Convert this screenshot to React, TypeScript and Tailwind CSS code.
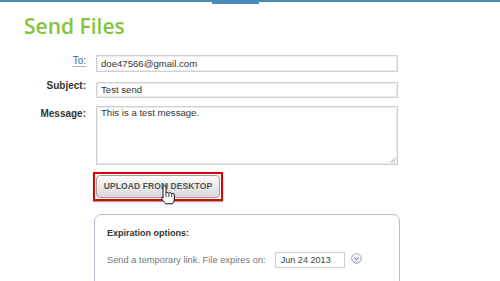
import React from "react";

function HandCursor() {
  return (
    <svg width="17" height="21" viewBox="0 0 17 21" className="absolute left-[160px] top-[185px]">
      <path
        d="M4.5 0.8c0.9 0 1.5 0.7 1.5 1.5V8c0.4-0.8 2.6-0.8 2.9 0.3c0.4-0.8 2.5-0.7 2.8 0.4c0.6-0.6 2.5-0.4 2.6 0.9V14c0 2.3-1.3 3.7-1.8 4.8H5.6c-0.6-1.1-2.4-2.8-3.5-4.4c-0.9-1.3-0.6-2.5 0.8-2.2L3 12.9V2.3C3 1.5 3.6 0.8 4.5 0.8Z"
        fill="#fff"
        stroke="#111"
        strokeWidth="1"
        strokeLinejoin="round"
      />
      <path d="M6 8v4M8.9 8.4v3.6M11.7 8.8v3.2" stroke="#111" strokeWidth="0.8" />
    </svg>
  );
}

export default function App() {
  return (
    <div className="w-[500px] h-[281px] overflow-hidden bg-white relative font-['Liberation_Sans',Arial,sans-serif] text-[#333]">
      <div className="flex items-start h-[4px]">
        <div className="w-[212px] h-[2px] bg-[#4a8cb8]" />
        <div className="w-[47px] h-[4px] bg-[#4a8cb8]" />
        <div className="flex-1 h-[2px] bg-[#4a8cb8]" />
      </div>

      <h1 className="ml-[24px] mt-[10px] text-[21px] leading-[24px] font-semibold text-[#86c440] font-['Open_Sans',sans-serif]">
        Send Files
      </h1>

      <div className="mt-[17px] flex flex-col">
        <div className="flex items-start">
          <div className="w-[86px] text-right text-[10px] leading-[12px] text-[#2d6b9c] underline decoration-[#8fb3d0] underline-offset-[2px]">
            To:
          </div>
          <div className="ml-[10px] w-[302px] h-[17px] border border-[#d0d0d0] shadow-[inset_0_0_0_1px_#ededed] pl-[4px] text-[9.6px] leading-[15px]">
            doe47566@gmail.com
          </div>
        </div>

        <div className="flex items-start mt-[10px]">
          <div className="w-[86px] text-right text-[10px] leading-[12px] font-bold -mt-[2px]">Subject:</div>
          <div className="ml-[10px] w-[302px] h-[16px] border border-[#d0d0d0] shadow-[inset_0_0_0_1px_#ededed] pl-[4px] text-[9.6px] leading-[14px]">
            Test send
          </div>
        </div>

        <div className="flex items-start mt-[8px]">
          <div className="w-[86px] text-right text-[10px] leading-[12px] font-bold pt-[2px]">Message:</div>
          <div className="relative ml-[10px] w-[302px] h-[59px] border border-[#d0d0d0] shadow-[inset_0_0_0_1px_#ededed] pl-[4px] text-[9.6px] leading-[11px]">
            This is a test message.
            <svg width="6" height="6" viewBox="0 0 6 6" className="absolute right-[1px] bottom-[1px]">
              <path d="M5.5 0.5L0.5 5.5M5.5 2.5L2.5 5.5M5.5 4.5L4.5 5.5" stroke="#999" strokeWidth="0.8" />
            </svg>
          </div>
        </div>
      </div>

      <div className="ml-[93px] mt-[7px] w-[130px] h-[29px] border-2 border-[#e00000] p-[1px] shadow-[0_1px_1px_rgba(0,0,0,0.35)]">
        <div className="h-full w-full rounded-[4px] border border-[#a0a0a0] bg-gradient-to-b from-[#fbfbfb] to-[#d9d9d9] flex items-center justify-center text-[8.5px] font-bold text-[#555] tracking-[0.1px]">
          UPLOAD FROM DESKTOP
        </div>
      </div>

      <div className="ml-[94px] mt-[13px] w-[306px] h-[80px] border border-[#b9bad3] rounded-[7px] pl-[12px] pt-[12px]">
        <div className="text-[9px] leading-[12px] font-bold">Expiration options:</div>
        <div className="mt-[13px] flex items-center h-[16px]">
          <span className="text-[9.3px] text-[#777] leading-[12px]">Send a temporary link. File expires on:</span>
          <div className="ml-[9px] w-[70px] h-[16px] border border-[#cfcfcf] pl-[5px] text-[9.1px] leading-[14px] text-[#444]">
            Jun 24 2013
          </div>
          <svg width="11" height="11" viewBox="0 0 11 11" className="ml-[6px] -mt-[4px]">
            <defs>
              <linearGradient id="g" x1="0" y1="0" x2="0" y2="1">
                <stop offset="0" stopColor="#ffffff" />
                <stop offset="1" stopColor="#dde3ec" />
              </linearGradient>
            </defs>
            <circle cx="5.5" cy="5.5" r="4.8" fill="url(#g)" stroke="#8e9db5" strokeWidth="0.9" />
            <path d="M3.4 4.7L5.5 6.7L7.6 4.7" fill="none" stroke="#556" strokeWidth="1" />
          </svg>
        </div>
      </div>

      <HandCursor />
    </div>
  );
}
